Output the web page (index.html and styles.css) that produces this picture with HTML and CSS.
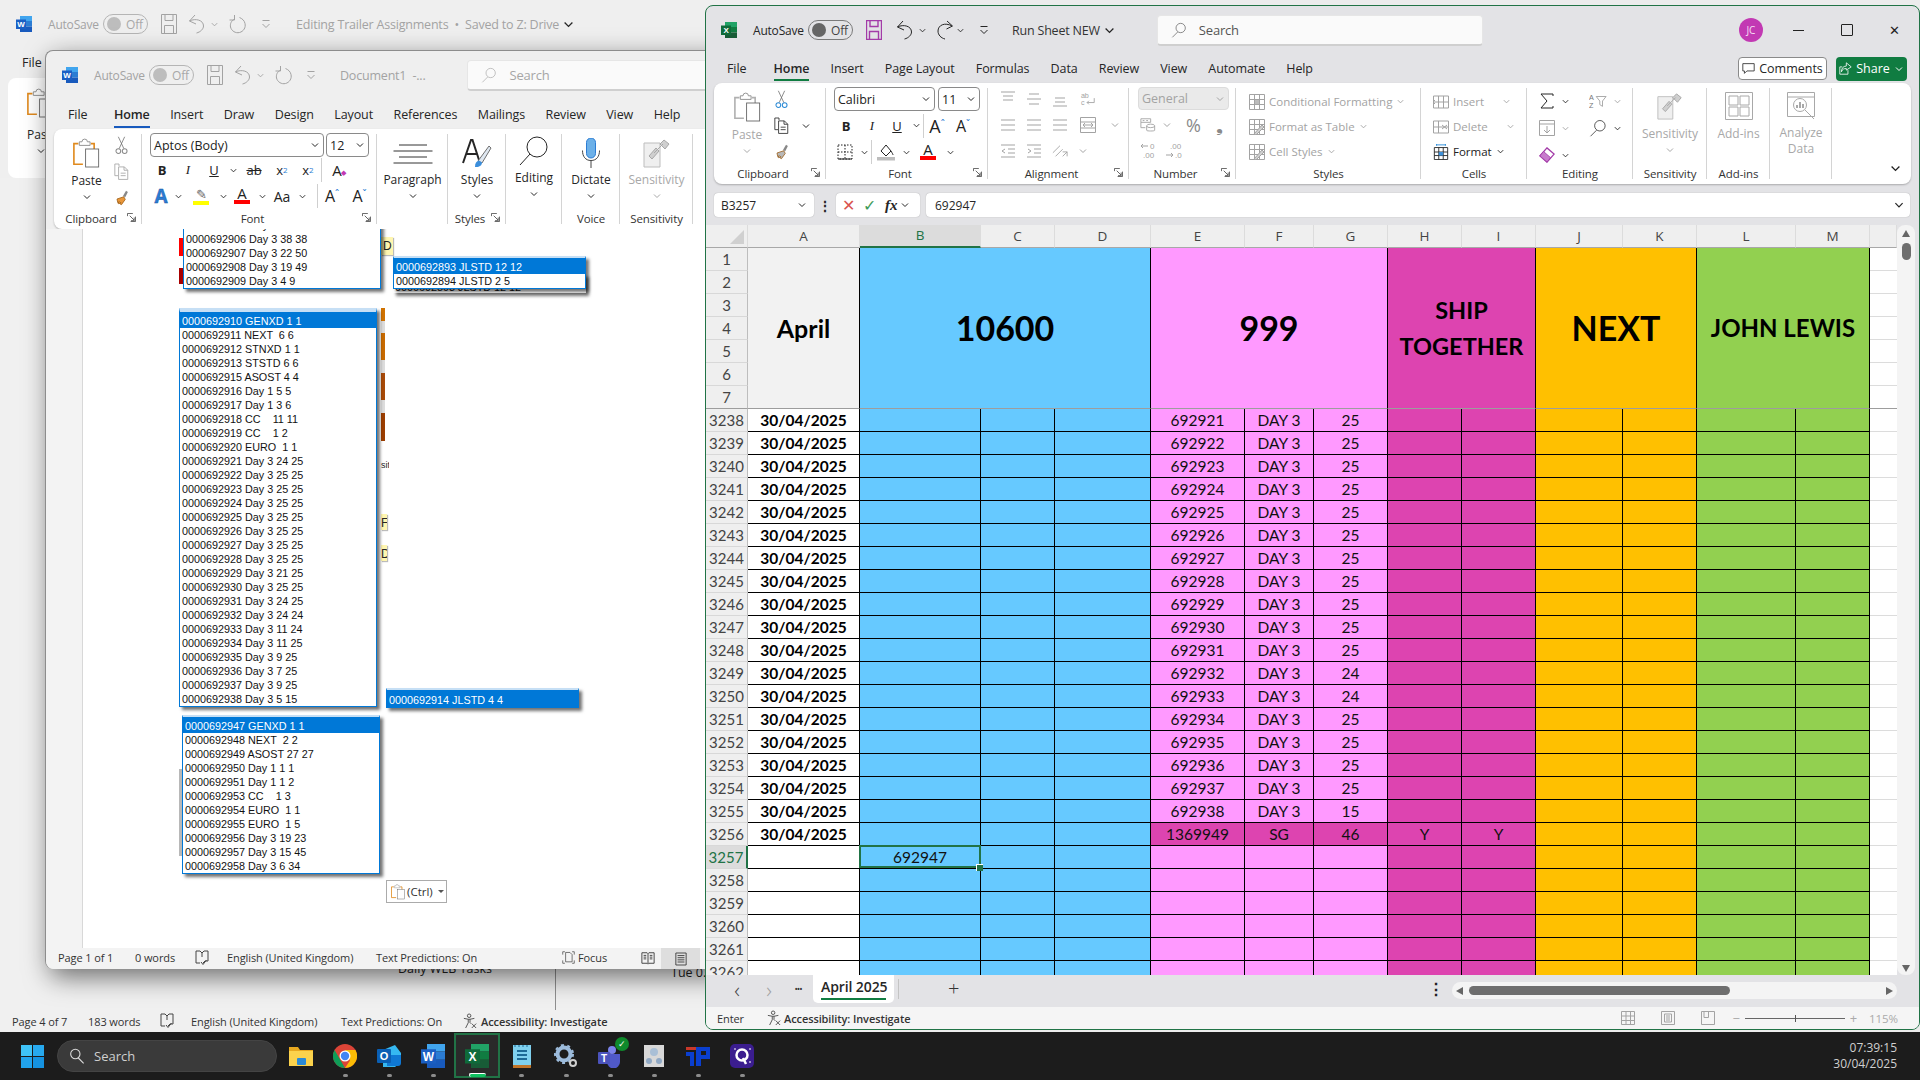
FILE: index.html
```html
<!DOCTYPE html>
<html lang="en">
<head>
<meta charset="utf-8">
<title>Word and Excel</title>
<link rel="stylesheet" href="styles.css">
</head>
<body>
<svg class="defs" aria-hidden="true">
  <symbol id="chev" viewBox="0 0 10 10"><path d="M2 3.5l3 3 3-3"/></symbol>
  <symbol id="word" viewBox="0 0 16 16"><path fill="#41a5ee" stroke="none" d="M4 0h12v5H4z"/><path fill="#2b7cd3" stroke="none" d="M4 5h12v5.500H4z"/><path fill="#185abd" stroke="none" d="M4 10.500h12V16H4z"/><rect x="0" y="3.500" width="10" height="9.500" fill="#1a5fc4" stroke="none"/><text x="5" y="11" font-size="8" font-weight="700" font-family="Liberation Sans" fill="#fff" stroke="none" text-anchor="middle">W</text></symbol>
  <symbol id="excel" viewBox="0 0 16 16"><path fill="#21a366" stroke="none" d="M4 0h12v5H4z"/><path fill="#107c41" stroke="none" d="M4 5h12v5.500H4z"/><path fill="#185c37" stroke="none" d="M4 10.500h12V16H4z"/><rect x="0" y="3.500" width="10" height="9.500" fill="#0f6b3a" stroke="none"/><text x="5" y="11" font-size="8" font-weight="700" font-family="Liberation Sans" fill="#fff" stroke="none" text-anchor="middle">X</text></symbol>
  <symbol id="save" viewBox="0 0 16 20"><path d="M.5.500h15v19H.5z M4 .5v6h8v-6 M3.500 19.500v-8h9v8"/></symbol>
  <symbol id="undo" viewBox="0 0 18 20"><path d="M7 1L1.500 7 8 10 M1.500 7c6-3 14-1 14 5 0 3-3 6-7 7"/></symbol>
  <symbol id="redo" viewBox="0 0 18 20"><path d="M11 1l5.500 5-6 3 M16 6C9 2 2 5 2 11c0 4 3 7 7 8"/></symbol>
  <symbol id="repeat" viewBox="0 0 18 20"><path d="M5.500 1v5h-5 M5.500 5C2 7 1 10 1.500 13c1 4 5 6.500 9 5.500 4-1 6.500-5 5.500-9-.5-3-3-5-5.500-6"/></symbol>
  <symbol id="qat" viewBox="0 0 10 10"><path d="M1.500 1.500h7 M1.500 5l3.500 3.500L8.500 5"/></symbol>
  <symbol id="find" viewBox="0 0 24 24"><circle cx="14.500" cy="9" r="7"/><path d="M10 15l-8 8"/></symbol>
  <symbol id="paste" viewBox="0 0 30 34"><path d="M20 6h3.500v6 M11 29H1V6h5" stroke="var(--clip,#e08a1e)" stroke-width="1.800"/><path d="M7 8V4h3a3 3 0 0 1 6 0h3v4z" fill="#fff" stroke="#8a8a8a"/><rect x="14" y="12" width="14.500" height="20" fill="#fff" stroke="#666"/></symbol>
  <symbol id="cut" viewBox="0 0 16 24"><path d="M4 1l7 15 M12 1L5 16" stroke="#6e6e6e"/><circle cx="4" cy="19" r="3" stroke="var(--sc,#8a8a8a)" stroke-width="1.300"/><circle cx="12" cy="19" r="3" stroke="var(--sc,#8a8a8a)" stroke-width="1.300"/></symbol>
  <symbol id="copy" viewBox="0 0 18 20"><path d="M6 3.500V1h-5v14h4 M5.500 4.500h7l4 4v11h-11z M12 4.500v4h4.500 M8 12h6M8 15h6"/></symbol>
  <symbol id="brush" viewBox="0 0 20 22"><path d="M12 9l4-7 2.500 1.500-3.500 7z" fill="#888" stroke="none"/><path d="M4 13l9-3 2 3.500-5 7-2-1 1-2-2.500 2-1-1 1.500-2-2 1.500z" fill="var(--br,#e9973a)" stroke="#9a5a10"/></symbol>
  <symbol id="launch" viewBox="0 0 10 10"><path d="M.5 3.500v-3h6 M3 3l5 5 M8 5v3.500H4.500 M9.500 4v5.500H4"/></symbol>
  <symbol id="book" viewBox="0 0 14 16"><path d="M1 1h4l2 2 2-2h4v10h-3l-2 2M7 3v4 M1 1v12h4"/><path d="M6 12l2 2.500 3.500-4.500"/></symbol>
  <symbol id="access" viewBox="0 0 16 18"><circle cx="7" cy="3" r="2"/><path d="M1 6l5 1h2l5-1 M6 7v4l-3 6 M8 7v4l1 1"/><path d="M10 12l5 5M15 12l-5 5"/></symbol>
  <symbol id="lines" viewBox="0 0 40 20"><path d="M6 1h28M.5 7h39M6 13h28M.5 19h39"/></symbol>
  <symbol id="styl" viewBox="0 0 30 30"><path d="M1 25L9 2h1.500L18 25 M4.500 16h11" stroke="#262626" stroke-width="2"/><path d="M16 23l11-15 2 2-9 15z" fill="#dfe7f0" stroke="#707070"/><path d="M13 29c0-4 1.500-6 4-6.500l3 2c0 3-3 5-7 4.500z" fill="#3b8edb" stroke="none"/></symbol>
  <symbol id="mag" viewBox="0 0 30 30"><circle cx="18" cy="11" r="10"/><path d="M11 18L1 29"/></symbol>
  <symbol id="mic" viewBox="0 0 20 30"><rect x="5.500" y="0" width="9" height="20" rx="4.500" fill="#6cb0e8" stroke="#2b7cd3"/><path d="M1.500 12.500c0 6 3 10 8.500 10s8.500-4 8.500-10 M10 22.500V30" stroke="#444"/></symbol>
  <symbol id="sens" viewBox="0 0 28 30"><path d="M1 5h16v24H1z" fill="#efefef" stroke="#bdbdbd"/><path d="M6 18l7-8 3 3-7 8z M17 6l4-4 5 4-4 5z" fill="#cfcfcf" stroke="#a8a8a8"/><path d="M11 15l9-9" stroke="#a8a8a8"/></symbol>
  <symbol id="al-l" viewBox="0 0 16 12"><path d="M1 1h14M1 6h14M1 11h14" /></symbol>
  <symbol id="al-t" viewBox="0 0 16 16"><path d="M1 1h14M3 5h10M3 9h10"/></symbol>
  <symbol id="al-m" viewBox="0 0 16 16"><path d="M3 3h10M1 8h14M3 13h10"/></symbol>
  <symbol id="al-b" viewBox="0 0 16 16"><path d="M3 7h10M3 11h10M1 15h14"/></symbol>
  <symbol id="wrap" viewBox="0 0 16 18"><text x="0" y="8" font-size="8" font-family="Liberation Sans" fill="currentColor" stroke="none">ab</text><text x="0" y="16" font-size="8" font-family="Liberation Sans" fill="currentColor" stroke="none">c</text><path d="M15 8v5H7m2-2l-2 2 2 2"/></symbol>
  <symbol id="merge" viewBox="0 0 16 16"><path d="M.5.500h15v15H.5z M.5 5h15M.5 11h15 M3 8h10 M5 6l-2 2 2 2 M11 6l2 2-2 2"/></symbol>
  <symbol id="indl" viewBox="0 0 16 14"><path d="M1 1h14M8 5h7M8 9h7M1 13h14 M5 5L2 7l3 2"/></symbol>
  <symbol id="indr" viewBox="0 0 16 14"><path d="M1 1h14M8 5h7M8 9h7M1 13h14 M2 5l3 2-3 2"/></symbol>
  <symbol id="orient" viewBox="0 0 18 16"><path d="M1 10L9 2M4 14l8-8 M12 14l5-5 M17 14V9h-5"/></symbol>
  <symbol id="border" viewBox="0 0 16 16"><path d="M1 1h14v14H1z M8 1v14M1 8h14" stroke-dasharray="1.500 1.500"/><path d="M1 15h14"/></symbol>
  <symbol id="fill" viewBox="0 0 18 18"><path d="M4 8l5-6 5 6-5 5z"/><path d="M14 8c1 2 2 3 2 4" /><rect x="0" y="14" width="18" height="3.500" fill="#bdbdbd" stroke="none"/></symbol>
  <symbol id="acc" viewBox="0 0 18 16"><path d="M1 1h11v4H1z M3 3h2M7 3h2 M1 5v6h5"/><ellipse cx="12" cy="9" rx="4.500" ry="2"/><path d="M7.500 9v5c0 1 9 1 9 0V9"/></symbol>
  <symbol id="dec-l" viewBox="0 0 18 18"><path d="M1 5h7M3 3L1 5l2 2"/><text x="10" y="8" font-size="8" font-family="Liberation Sans" fill="currentColor" stroke="none">0</text><text x="3" y="17" font-size="8" font-family="Liberation Sans" fill="currentColor" stroke="none">.00</text></symbol>
  <symbol id="dec-r" viewBox="0 0 18 18"><text x="5" y="8" font-size="8" font-family="Liberation Sans" fill="currentColor" stroke="none">.00</text><path d="M1 14h7M6 12l2 2-2 2"/><text x="10" y="17" font-size="8" font-family="Liberation Sans" fill="currentColor" stroke="none">.0</text></symbol>
  <symbol id="cf" viewBox="0 0 16 16"><path d="M.5.500h15v15H.5z M.5 5.500h15M.5 10.500h15M5.500.5v15M10.500.5v15"/><rect x="6" y="6" width="4" height="4" fill="#bbb" stroke="none"/></symbol>
  <symbol id="tbl" viewBox="0 0 16 16"><path d="M.5.500h15v15H.5z M.5 5.500h15M.5 10.500h15M5.500.5v15M10.500.5v15"/><path d="M5 15l8-9 2 2-8 8z" fill="#d0d0d0"/></symbol>
  <symbol id="c-ins" viewBox="0 0 16 14"><path d="M.5 1h15v12H.5z M5.500 1v12M10.500 1v12M5.500 7h10"/><path d="M5 7H0m2-2L0 7l2 2"/></symbol>
  <symbol id="c-del" viewBox="0 0 16 14"><path d="M.5 1h15v12H.5z M5.500 1v12M.5 7h15"/><path d="M9 5l5 4M14 5l-5 4"/></symbol>
  <symbol id="c-fmt" viewBox="0 0 16 18"><path d="M.5 4h15v13.500H.5z M.5 9h15M.5 13h15M5.500 4v13.500M10.500 4v13.500"/><rect x="5.500" y="9" width="5" height="4" fill="#3d8fd8" stroke="none"/><path d="M3 1h10M3 0v2M13 0v2" stroke="#1f86d8"/></symbol>
  <symbol id="sum" viewBox="0 0 16 16"><path d="M14 3V1H2l6 7-6 7h12v-2"/></symbol>
  <symbol id="sort" viewBox="0 0 20 18"><text x="0" y="8" font-size="8" font-family="Liberation Sans" fill="#777" stroke="none">A</text><text x="0" y="17" font-size="8" font-family="Liberation Sans" fill="#777" stroke="none">Z</text><path d="M8 4h11l-4 5v6l-3-2V9z"/></symbol>
  <symbol id="fdown" viewBox="0 0 16 16"><path d="M.5.500h15v15H.5z M.5 4h15 M8 6v7M5 10l3 3 3-3"/></symbol>
  <symbol id="erase" viewBox="0 0 18 18"><path d="M1 10l8-9 8 7-8 9z" fill="#fff" stroke="#a33ba8" stroke-width="1.500"/><path d="M1 10l4-5 8 7-4 5z" fill="#c77bcc" stroke="#a33ba8"/></symbol>
  <symbol id="addin" viewBox="0 0 28 28"><path d="M.5.500h27v27H.5z M4 4h9v9H4z M15 4h9v9h-9z M4 15h9v9H4z M15 15h9v9h-9z"/></symbol>
  <symbol id="analyze" viewBox="0 0 28 28"><path d="M.5.500h27v24H.5z M.5 5h27"/><circle cx="13" cy="13" r="6.500" fill="#fff"/><path d="M10 16v-3M13 16v-6M16 16v-4" stroke-width="2"/><path d="M18 18l9 9"/></symbol>
  <symbol id="comment" viewBox="0 0 16 16"><path d="M1 2h14v9H6l-3 3v-3H1z"/></symbol>
  <symbol id="share" viewBox="0 0 16 16"><path d="M9 1l6 5-6 4V8C6 8 4 9 3 12c0-4 2-7 6-7z M11 10v5H1V6h3"/></symbol>
  <symbol id="focus" viewBox="0 0 18 18"><path d="M1 5V1h3 M14 1h3v4 M1 13v4h3 M14 17h3v-4 M5 2h6l3 3v10H5z"/></symbol>
  <symbol id="read" viewBox="0 0 16 16"><path d="M1 2h6l1 1 1-1h6v12H9l-1 1-1-1H1z M8 3v11 M3 5h3M3 7h3M3 9h3M10 5h3M10 7h3M10 9h3"/></symbol>
  <symbol id="print" viewBox="0 0 14 16"><path d="M1 1h12v14H1z M3 4h8M3 6.500h8M3 9h8M3 11.500h8"/></symbol>
  <symbol id="grid" viewBox="0 0 14 14"><path d="M.5.500h13v13H.5z M.5 5h13M.5 9.500h13M5 .5v13M9.500.5v13"/></symbol>
  <symbol id="pagel" viewBox="0 0 14 14"><path d="M.5.500h13v13H.5z M3.500 3h7v8h-7z M5 5h4M5 7h4M5 9h4"/></symbol>
  <symbol id="pageb" viewBox="0 0 14 14"><path d="M.5.500h13v13H.5z M7.500.5v6H3V.5"/></symbol>
  <symbol id="win" viewBox="0 0 24 24"><path fill="#3fc3f7" d="M0 0h11.500v11.500H0z"/><path fill="#27a9ee" d="M12.500 0H24v11.500H12.500z"/><path fill="#21a3ec" d="M0 12.500h11.500V24H0z"/><path fill="#1592e0" d="M12.500 12.500H24V24H12.500z"/></symbol>
  <symbol id="folder" viewBox="0 0 24 24"><path fill="#e8a920" d="M0 3h9l2 3h13v16H0z"/><path fill="#fbd24c" d="M0 7h24v15H0z"/><rect x="8" y="14" width="9" height="7" rx="1" fill="#2a8ad6"/></symbol>
  <symbol id="chrome" viewBox="0 0 24 24"><circle cx="12" cy="12" r="12" fill="#db4437"/><path fill="#0f9d58" d="M12 24A12 12 0 0 1 1.600 6l6 10.500z"/><path fill="#fbbc05" d="M12 24A12 12 0 0 0 22.400 6H12l5 10.500z"/><circle cx="12" cy="12" r="5.500" fill="#fff"/><circle cx="12" cy="12" r="4.200" fill="#4285f4"/></symbol>
  <symbol id="outlook" viewBox="0 0 24 24"><path fill="#35b8f1" d="M6 6l12-5 6 8v9l-6 5H6z"/><path fill="#0f78d4" d="M10 11h14v8a3 3 0 0 1-3 3H10z"/><rect x="0" y="5" width="14" height="14" rx="1" fill="#0a5fb4"/><text x="7" y="16" font-size="11" font-weight="700" font-family="Liberation Sans" fill="#fff" text-anchor="middle">O</text></symbol>
  <symbol id="notes" viewBox="0 0 24 24"><rect x="3" y="1" width="18" height="22" fill="#7fd0ee"/><rect x="3" y="21" width="18" height="3" fill="#c0752a"/><path d="M7 7h10M7 11h10M7 15h10" stroke="#1d6a96" stroke-width="2"/><path d="M5 1v2M9 1v2M13 1v2M17 1v2" stroke="#1d6a96"/></symbol>
  <symbol id="gear" viewBox="0 0 24 24"><circle cx="10" cy="10" r="6.500" fill="none" stroke="#9dbcdc" stroke-width="4"/><circle cx="10" cy="10" r="9" fill="none" stroke="#9dbcdc" stroke-width="2" stroke-dasharray="3 3.500"/><circle cx="19" cy="19" r="3" fill="none" stroke="#d0d0d0" stroke-width="2"/></symbol>
  <symbol id="teams" viewBox="0 0 24 24"><circle cx="14" cy="6" r="4" fill="#7b83eb"/><path fill="#5059c9" d="M9 10h13v8a6 6 0 0 1-13 0z"/><rect x="0" y="8" width="12" height="12" rx="1" fill="#4b53bc"/><text x="6" y="18" font-size="10" font-weight="700" font-family="Liberation Sans" fill="#fff" text-anchor="middle">T</text></symbol>
  <symbol id="disk" viewBox="0 0 24 24"><rect x="2" y="1" width="20" height="22" fill="#d8d8d8"/><circle cx="12" cy="8" r="4" fill="#a9bfd6"/><circle cx="7" cy="17" r="3" fill="#8fa8c4"/><circle cx="17" cy="17" r="3" fill="#8fa8c4"/></symbol>
  <symbol id="pp" viewBox="0 0 24 24"><path fill="#c8382a" d="M0 3h10v3H0z"/><path fill="#0a3fd0" d="M0 8h8v14H4V12H0z M10 3h14v12H15v7h-5zM15 7v4h5V7z"/></symbol>
  <symbol id="qq" viewBox="0 0 24 24"><rect width="24" height="24" rx="5" fill="#3b1d8f"/><circle cx="12" cy="11" r="5.500" fill="none" stroke="#fff" stroke-width="2.500"/><path d="M13 14l3 6" stroke="#fff" stroke-width="2.500"/><path d="M4 5h2M20 4v2M19 18h2" stroke="#fff"/></symbol>
</svg>

<main class="desktop">
  <!-- window behind -->
  <section class="win-back">
    <header class="title">
      <svg class="q-app"><use href="#word"/></svg>
      <span class="q-auto dim">AutoSave</span>
      <span class="toggle dim"><i></i>Off</span>
      <svg class="q-save dim ic"><use href="#save"/></svg>
      <svg class="q-undo dim ic"><use href="#undo"/></svg>
      <svg class="q-chev dim ic"><use href="#chev"/></svg>
      <svg class="q-redo dim ic"><use href="#repeat"/></svg>
      <svg class="q-qat dim ic"><use href="#qat"/></svg>
      <span class="q-name dim">Editing Trailer Assignments&nbsp; •&nbsp; Saved to Z: Drive</span>
      <svg class="chev dim ic"><use href="#chev"/></svg>
    </header>
    <div class="back-tab">File</div>
    <div class="back-rib">
      <svg class="back-paste ic"><use href="#paste"/></svg>
      <span>Pas</span>
      <svg class="chev ic"><use href="#chev"/></svg>
    </div>
    <div class="back-doc">
      <span class="back-line"></span>
      <span class="back-txt a">Daily WEB Tasks</span>
      <span class="back-txt b">Tue 0...</span>
    </div>
    <footer class="status back-status">
      <span class="st-a">Page 4 of 7</span>
      <span class="st-b">183 words</span>
      <svg class="st-i ic"><use href="#book"/></svg>
      <span class="st-c">English (United Kingdom)</span>
      <span class="st-d">Text Predictions: On</span>
      <svg class="st-i st-acc ic"><use href="#access"/></svg>
      <b class="st-e">Accessibility: Investigate</b>
    </footer>
  </section>

  <!-- front word window -->
  <section class="win-word">
    <header class="title">
      <svg class="q-app"><use href="#word"/></svg>
      <span class="q-auto dim">AutoSave</span>
      <span class="toggle dim"><i></i>Off</span>
      <svg class="q-save dim ic"><use href="#save"/></svg>
      <svg class="q-undo dim ic"><use href="#undo"/></svg>
      <svg class="q-chev dim ic"><use href="#chev"/></svg>
      <svg class="q-redo dim ic"><use href="#repeat"/></svg>
      <svg class="q-qat dim ic"><use href="#qat"/></svg>
      <span class="q-name dim">Document1 &nbsp;-...</span>
      <span class="search word-search dim"><svg class="ic"><use href="#find"/></svg>Search</span>
    </header>
    <nav class="tabs word-tabs">
      <span>File</span><span class="on">Home</span><span>Insert</span><span>Draw</span><span>Design</span><span>Layout</span><span>References</span><span>Mailings</span><span>Review</span><span>View</span><span>Help</span>
    </nav>
    <div class="ribbon word-ribbon">
      <div class="grp wc-clip">
        <div class="grp-body cols">
          <div class="big paste-big">
            <svg class="ic i-paste"><use href="#paste"/></svg>
            <span>Paste</span>
            <svg class="chev ic"><use href="#chev"/></svg>
          </div>
          <div class="stack">
            <svg class="ic s-tool dim"><use href="#cut"/></svg>
            <svg class="ic s-tool dim"><use href="#copy"/></svg>
            <svg class="ic s-tool dim"><use href="#brush"/></svg>
          </div>
        </div>
        <div class="lab lau">Clipboard<svg class="ic launch"><use href="#launch"/></svg></div>
      </div>
      <div class="grp wc-font">
        <div class="grp-body">
          <div class="combo-row">
            <span class="combo w174">Aptos (Body)<svg class="chev ic"><use href="#chev"/></svg></span>
            <span class="combo w43">12<svg class="chev ic"><use href="#chev"/></svg></span>
          </div>
          <div class="btn-row r1">
            <b class="b w26">B</b><i class="b w26 serifi">I</i><u class="b w26">U</u><span class="b w12"><svg class="chev ic"><use href="#chev"/></svg></span>
            <s class="b w30 dim2">ab</s><span class="b w26">x<sub>2</sub></span><span class="b w26">x<sup>2</sup></span><span class="sep"></span><span class="b w30 ap">A<em>◆</em></span>
          </div>
          <div class="btn-row r2">
            <span class="b w24 txt-eff">A</span><span class="b w10"><svg class="chev ic"><use href="#chev"/></svg></span>
            <span class="b w36 col-a"><span class="pen">✎</span><em class="bar yellow"></em></span><span class="b w8"><svg class="chev ic"><use href="#chev"/></svg></span>
            <span class="b w30 col-a fa">A<em class="bar red"></em></span><span class="b w10"><svg class="chev ic"><use href="#chev"/></svg></span>
            <span class="b w30 aa">Aa</span><span class="b w10"><svg class="chev ic"><use href="#chev"/></svg></span><span class="sep r2sep"></span>
            <span class="b w28 grow">A<em>ˆ</em></span><span class="b w27 grow">A<em>ˇ</em></span>
          </div>
        </div>
        <div class="lab lau">Font<svg class="ic launch"><use href="#launch"/></svg></div>
      </div>
      <div class="grp wc-para">
        <div class="grp-body big top6">
          <svg class="ic i-lines"><use href="#lines"/></svg>
          <span>Paragraph</span>
          <svg class="chev ic"><use href="#chev"/></svg>
        </div>
      </div>
      <div class="grp wc-styl">
        <div class="grp-body big top6">
          <svg class="ic i-30"><use href="#styl"/></svg>
          <span>Styles</span>
          <svg class="chev ic"><use href="#chev"/></svg>
        </div>
        <div class="lab lau">Styles<svg class="ic launch"><use href="#launch"/></svg></div>
      </div>
      <div class="grp wc-edit">
        <div class="grp-body big top4">
          <svg class="ic i-30"><use href="#mag"/></svg>
          <span>Editing</span>
          <svg class="chev ic"><use href="#chev"/></svg>
        </div>
      </div>
      <div class="grp wc-voice">
        <div class="grp-body big top6">
          <svg class="ic i-30"><use href="#mic"/></svg>
          <span>Dictate</span>
          <svg class="chev ic"><use href="#chev"/></svg>
        </div>
        <div class="lab">Voice</div>
      </div>
      <div class="grp wc-sens last">
        <div class="grp-body big top6 off">
          <svg class="ic i-30"><use href="#sens"/></svg>
          <span>Sensitivity</span>
          <svg class="chev ic"><use href="#chev"/></svg>
        </div>
        <div class="lab">Sensitivity</div>
      </div>
    </div>
    <div class="word-doc">
      <span class="page-edge"></span>
      <span class="sl red1"></span><span class="sl red2"></span>
      <span class="sl tag d1">D</span><span class="sl tag f2">F</span><span class="sl tag d3">D</span>
      <span class="sl or1"></span><span class="sl gr1"></span><span class="sl or2"></span><span class="sl gr2"></span><span class="sl br1"></span><span class="sl gr3"></span><span class="sl br2"></span><span class="sl sit">sit</span><span class="sl pg"></span>

      <div class="lb under">0000692893 JLSTD 12 12</div>
      <div class="lb lb1">
        <div>0000692905 Day 3 25 25</div>
        <div>0000692906 Day 3 38 38</div>
        <div>0000692907 Day 3 22 50</div>
        <div>0000692908 Day 3 19 49</div>
        <div>0000692909 Day 3 4 9</div>
      </div>
      <div class="lb lb2 topped">
        <div class="sel">0000692893 JLSTD 12 12</div>
        <div>0000692894 JLSTD 2 5</div>
      </div>
      <div class="lb lb3 topped">
        <div class="sel">0000692910 GENXD 1 1</div>
        <div>0000692911 NEXT  6 6</div>
        <div>0000692912 STNXD 1 1</div>
        <div>0000692913 STSTD 6 6</div>
        <div>0000692915 ASOST 4 4</div>
        <div>0000692916 Day 1 5 5</div>
        <div>0000692917 Day 1 3 6</div>
        <div>0000692918 CC    11 11</div>
        <div>0000692919 CC    1 2</div>
        <div>0000692920 EURO  1 1</div>
        <div>0000692921 Day 3 24 25</div>
        <div>0000692922 Day 3 25 25</div>
        <div>0000692923 Day 3 25 25</div>
        <div>0000692924 Day 3 25 25</div>
        <div>0000692925 Day 3 25 25</div>
        <div>0000692926 Day 3 25 25</div>
        <div>0000692927 Day 3 25 25</div>
        <div>0000692928 Day 3 25 25</div>
        <div>0000692929 Day 3 21 25</div>
        <div>0000692930 Day 3 25 25</div>
        <div>0000692931 Day 3 24 25</div>
        <div>0000692932 Day 3 24 24</div>
        <div>0000692933 Day 3 11 24</div>
        <div>0000692934 Day 3 11 25</div>
        <div>0000692935 Day 3 9 25</div>
        <div>0000692936 Day 3 7 25</div>
        <div>0000692937 Day 3 9 25</div>
        <div>0000692938 Day 3 5 15</div>
      </div>
      <div class="lb lb4 topped">
        <div class="sel">0000692914 JLSTD 4 4</div>
      </div>
      <div class="lb lb5 topped">
        <div class="sel">0000692947 GENXD 1 1</div>
        <div>0000692948 NEXT  2 2</div>
        <div>0000692949 ASOST 27 27</div>
        <div>0000692950 Day 1 1 1</div>
        <div>0000692951 Day 1 1 2</div>
        <div>0000692953 CC    1 3</div>
        <div>0000692954 EURO  1 1</div>
        <div>0000692955 EURO  1 5</div>
        <div>0000692956 Day 3 19 23</div>
        <div>0000692957 Day 3 15 45</div>
        <div>0000692958 Day 3 6 34</div>
      </div>
      <div class="ctrl"><svg class="ic"><use href="#paste"/></svg>(Ctrl)<span class="caret"></span></div>
    </div>
    <footer class="status word-status">
      <span class="st-a">Page 1 of 1</span>
      <span class="st-b">0 words</span>
      <svg class="st-i ic"><use href="#book"/></svg>
      <span class="st-c">English (United Kingdom)</span>
      <span class="st-d">Text Predictions: On</span>
      <span class="st-focus"><svg class="ic"><use href="#focus"/></svg>Focus</span>
      <svg class="st-read ic"><use href="#read"/></svg>
      <span class="st-print"><svg class="ic"><use href="#print"/></svg></span>
    </footer>
  </section>

  <!-- excel window -->
  <section class="win-excel">
    <header class="title">
      <svg class="q-app"><use href="#excel"/></svg>
      <span class="q-auto">AutoSave</span>
      <span class="toggle"><i></i>Off</span>
      <svg class="q-save ic purple"><use href="#save"/></svg>
      <svg class="q-undo ic"><use href="#undo"/></svg>
      <svg class="q-chev ic"><use href="#chev"/></svg>
      <svg class="q-redo ic"><use href="#redo"/></svg>
      <svg class="q-chev2 ic"><use href="#chev"/></svg>
      <svg class="q-qat ic"><use href="#qat"/></svg>
      <span class="q-name">Run Sheet NEW</span>
      <svg class="chev ic"><use href="#chev"/></svg>
      <span class="search xl-search"><svg class="ic"><use href="#find"/></svg>Search</span>
      <span class="avatar">JC</span>
      <span class="wbtn min"></span>
      <span class="wbtn max"></span>
      <span class="wbtn close">✕</span>
    </header>
    <div class="tabbar">
      <nav class="tabs xl-tabs">
        <span>File</span><span class="on">Home</span><span>Insert</span><span>Page Layout</span><span>Formulas</span><span>Data</span><span>Review</span><span>View</span><span>Automate</span><span>Help</span>
      </nav>
      <span class="comments"><svg class="ic"><use href="#comment"/></svg>Comments</span>
      <span class="share"><svg class="ic"><use href="#share"/></svg>Share<svg class="chev ic"><use href="#chev"/></svg></span>
    </div>
    <div class="ribbon xl-ribbon">
      <div class="grp xc-clip">
        <div class="grp-body cols">
          <div class="big xl-paste off">
            <svg class="ic i-paste grey-clip"><use href="#paste"/></svg>
            <span>Paste</span>
            <svg class="chev ic"><use href="#chev"/></svg>
          </div>
          <div class="stack xl-stack">
            <svg class="ic s-tool blue-sc"><use href="#cut"/></svg>
            <span class="s-line"><svg class="ic s-tool"><use href="#copy"/></svg><svg class="chev ic"><use href="#chev"/></svg></span>
            <svg class="ic s-tool grey-br"><use href="#brush"/></svg>
          </div>
        </div>
        <div class="lab lau">Clipboard<svg class="ic launch"><use href="#launch"/></svg></div>
      </div>
      <div class="grp xc-font">
        <div class="grp-body">
          <div class="combo-row">
            <span class="combo w101">Calibri<svg class="chev ic"><use href="#chev"/></svg></span>
            <span class="combo w42">11<svg class="chev ic"><use href="#chev"/></svg></span>
          </div>
          <div class="btn-row xr1">
            <b class="b w26">B</b><i class="b w26 serifi">I</i><u class="b w24">U</u><span class="b w14"><svg class="chev ic"><use href="#chev"/></svg></span><span class="sep"></span>
            <span class="b w26 grow big-a">A<em>ˆ</em></span><span class="b w26 grow">A<em>ˇ</em></span>
          </div>
          <div class="btn-row xr2">
            <span class="b w24 dim"><svg class="ic s16"><use href="#border"/></svg></span><span class="b w14 dim"><svg class="chev ic"><use href="#chev"/></svg></span><span class="sep"></span>
            <span class="b w28 dim"><svg class="ic s18"><use href="#fill"/></svg></span><span class="b w12 dim"><svg class="chev ic"><use href="#chev"/></svg></span>
            <span class="b w32 col-a fa">A<em class="bar red"></em></span><span class="b w12"><svg class="chev ic"><use href="#chev"/></svg></span>
          </div>
        </div>
        <div class="lab lau">Font<svg class="ic launch"><use href="#launch"/></svg></div>
      </div>
      <div class="grp xc-align">
        <div class="grp-body al-body dim">
          <div class="al-row"><svg class="ic s16"><use href="#al-t"/></svg><svg class="ic s16"><use href="#al-m"/></svg><svg class="ic s16"><use href="#al-b"/></svg><svg class="ic s16 ml2"><use href="#wrap"/></svg></div>
          <div class="al-row"><svg class="ic s16"><use href="#al-l"/></svg><svg class="ic s16"><use href="#al-l"/></svg><svg class="ic s16"><use href="#al-l"/></svg><svg class="ic s16 ml2"><use href="#merge"/></svg><svg class="chev ic ml8"><use href="#chev"/></svg></div>
          <div class="al-row"><svg class="ic s16"><use href="#indl"/></svg><svg class="ic s16"><use href="#indr"/></svg><svg class="ic s16"><use href="#orient"/></svg><svg class="chev ic"><use href="#chev"/></svg></div>
        </div>
        <div class="lab lau">Alignment<svg class="ic launch"><use href="#launch"/></svg></div>
      </div>
      <div class="grp xc-num">
        <div class="grp-body num-body dim">
          <span class="combo general">General<svg class="chev ic"><use href="#chev"/></svg></span>
          <div class="num-row"><svg class="ic s16"><use href="#acc"/></svg><svg class="chev ic"><use href="#chev"/></svg><span class="pct">%</span><span class="cma">❟</span></div>
          <div class="num-row dec"><svg class="ic s18"><use href="#dec-l"/></svg><svg class="ic s18"><use href="#dec-r"/></svg></div>
        </div>
        <div class="lab lau">Number<svg class="ic launch"><use href="#launch"/></svg></div>
      </div>
      <div class="grp xc-sty">
        <div class="grp-body list dim">
          <span><svg class="ic s16"><use href="#cf"/></svg>Conditional Formatting<svg class="chev ic"><use href="#chev"/></svg></span>
          <span><svg class="ic s16"><use href="#tbl"/></svg>Format as Table<svg class="chev ic"><use href="#chev"/></svg></span>
          <span><svg class="ic s16"><use href="#tbl"/></svg>Cell Styles<svg class="chev ic"><use href="#chev"/></svg></span>
        </div>
        <div class="lab">Styles</div>
      </div>
      <div class="grp xc-cells">
        <div class="grp-body list">
          <span class="dim"><svg class="ic s16"><use href="#c-ins"/></svg>Insert<svg class="chev ic far"><use href="#chev"/></svg></span>
          <span class="dim"><svg class="ic s16"><use href="#c-del"/></svg>Delete<svg class="chev ic far"><use href="#chev"/></svg></span>
          <span><svg class="ic s16"><use href="#c-fmt"/></svg>Format<svg class="chev ic"><use href="#chev"/></svg></span>
        </div>
        <div class="lab">Cells</div>
      </div>
      <div class="grp xc-edit">
        <div class="grp-body ed-body">
          <span class="ed-a"><svg class="ic s16"><use href="#sum"/></svg><svg class="chev ic"><use href="#chev"/></svg></span>
          <span class="ed-b dim"><svg class="ic s18"><use href="#sort"/></svg><svg class="chev ic"><use href="#chev"/></svg></span>
          <span class="ed-a dim"><svg class="ic s16"><use href="#fdown"/></svg><svg class="chev ic"><use href="#chev"/></svg></span>
          <span class="ed-b"><svg class="ic s18"><use href="#find"/></svg><svg class="chev ic"><use href="#chev"/></svg></span>
          <span class="ed-a"><svg class="ic s16"><use href="#erase"/></svg><svg class="chev ic"><use href="#chev"/></svg></span>
        </div>
        <div class="lab">Editing</div>
      </div>
      <div class="grp xc-sens">
        <div class="grp-body big top6 off">
          <svg class="ic i-28"><use href="#sens"/></svg>
          <span>Sensitivity</span>
          <svg class="chev ic"><use href="#chev"/></svg>
        </div>
        <div class="lab">Sensitivity</div>
      </div>
      <div class="grp xc-add">
        <div class="grp-body big top6 off">
          <svg class="ic i-28"><use href="#addin"/></svg>
          <span>Add-ins</span>
        </div>
        <div class="lab">Add-ins</div>
      </div>
      <div class="grp xc-an">
        <div class="grp-body big top6 off">
          <svg class="ic i-28"><use href="#analyze"/></svg>
          <span class="two">Analyze<br>Data</span>
        </div>
      </div>
      <svg class="ic collapse"><use href="#chev"/></svg>
    </div>
    <div class="fbar">
      <span class="namebox">B3257<svg class="chev ic"><use href="#chev"/></svg></span>
      <span class="kebab">⋮</span>
      <span class="fbtns"><span class="fx-x">✕</span><span class="fx-ok">✓</span><span class="fx-f">fx</span><svg class="chev ic dim"><use href="#chev"/></svg></span>
      <span class="finput">692947<svg class="chev ic"><use href="#chev"/></svg></span>
    </div>
    <div class="gridwrap">
      <div class="sheetclip">
        <table class="sheet">
          <colgroup>
            <col class="c-rh"><col class="c-a"><col class="c-b"><col class="c-c"><col class="c-d"><col class="c-e"><col class="c-f"><col class="c-g"><col class="c-h"><col class="c-i"><col class="c-j"><col class="c-k"><col class="c-l"><col class="c-m"><col class="c-n">
          </colgroup>
          <thead>
            <tr><th class="corner"><span></span></th><th>A</th><th class="on">B</th><th>C</th><th>D</th><th>E</th><th>F</th><th>G</th><th>H</th><th>I</th><th>J</th><th>K</th><th>L</th><th>M</th><th></th></tr>
          </thead>
          <tbody>
            <tr><th>1</th><td rowspan="7" class="hd h-april">April</td><td rowspan="7" colspan="3" class="hd h-big">10600</td><td rowspan="7" colspan="3" class="hd h-big">999</td><td rowspan="7" colspan="2" class="hd h-ship">SHIP<br>TOGETHER</td><td rowspan="7" colspan="2" class="hd h-big">NEXT</td><td rowspan="7" colspan="2" class="hd h-john">JOHN LEWIS</td><td class="n"></td></tr>
            <tr><th>2</th><td class="n"></td></tr>
            <tr><th>3</th><td class="n"></td></tr>
            <tr><th>4</th><td class="n"></td></tr>
            <tr><th>5</th><td class="n"></td></tr>
            <tr><th>6</th><td class="n"></td></tr>
            <tr class="frozen"><th>7</th><td class="n"></td></tr>
            <tr><th>3238</th><td class="dt">30/04/2025</td><td></td><td></td><td></td><td>692921</td><td>DAY 3</td><td>25</td><td></td><td></td><td></td><td></td><td></td><td></td><td class="n"></td></tr>
            <tr><th>3239</th><td class="dt">30/04/2025</td><td></td><td></td><td></td><td>692922</td><td>DAY 3</td><td>25</td><td></td><td></td><td></td><td></td><td></td><td></td><td class="n"></td></tr>
            <tr><th>3240</th><td class="dt">30/04/2025</td><td></td><td></td><td></td><td>692923</td><td>DAY 3</td><td>25</td><td></td><td></td><td></td><td></td><td></td><td></td><td class="n"></td></tr>
            <tr><th>3241</th><td class="dt">30/04/2025</td><td></td><td></td><td></td><td>692924</td><td>DAY 3</td><td>25</td><td></td><td></td><td></td><td></td><td></td><td></td><td class="n"></td></tr>
            <tr><th>3242</th><td class="dt">30/04/2025</td><td></td><td></td><td></td><td>692925</td><td>DAY 3</td><td>25</td><td></td><td></td><td></td><td></td><td></td><td></td><td class="n"></td></tr>
            <tr><th>3243</th><td class="dt">30/04/2025</td><td></td><td></td><td></td><td>692926</td><td>DAY 3</td><td>25</td><td></td><td></td><td></td><td></td><td></td><td></td><td class="n"></td></tr>
            <tr><th>3244</th><td class="dt">30/04/2025</td><td></td><td></td><td></td><td>692927</td><td>DAY 3</td><td>25</td><td></td><td></td><td></td><td></td><td></td><td></td><td class="n"></td></tr>
            <tr><th>3245</th><td class="dt">30/04/2025</td><td></td><td></td><td></td><td>692928</td><td>DAY 3</td><td>25</td><td></td><td></td><td></td><td></td><td></td><td></td><td class="n"></td></tr>
            <tr><th>3246</th><td class="dt">30/04/2025</td><td></td><td></td><td></td><td>692929</td><td>DAY 3</td><td>25</td><td></td><td></td><td></td><td></td><td></td><td></td><td class="n"></td></tr>
            <tr><th>3247</th><td class="dt">30/04/2025</td><td></td><td></td><td></td><td>692930</td><td>DAY 3</td><td>25</td><td></td><td></td><td></td><td></td><td></td><td></td><td class="n"></td></tr>
            <tr><th>3248</th><td class="dt">30/04/2025</td><td></td><td></td><td></td><td>692931</td><td>DAY 3</td><td>25</td><td></td><td></td><td></td><td></td><td></td><td></td><td class="n"></td></tr>
            <tr><th>3249</th><td class="dt">30/04/2025</td><td></td><td></td><td></td><td>692932</td><td>DAY 3</td><td>24</td><td></td><td></td><td></td><td></td><td></td><td></td><td class="n"></td></tr>
            <tr><th>3250</th><td class="dt">30/04/2025</td><td></td><td></td><td></td><td>692933</td><td>DAY 3</td><td>24</td><td></td><td></td><td></td><td></td><td></td><td></td><td class="n"></td></tr>
            <tr><th>3251</th><td class="dt">30/04/2025</td><td></td><td></td><td></td><td>692934</td><td>DAY 3</td><td>25</td><td></td><td></td><td></td><td></td><td></td><td></td><td class="n"></td></tr>
            <tr><th>3252</th><td class="dt">30/04/2025</td><td></td><td></td><td></td><td>692935</td><td>DAY 3</td><td>25</td><td></td><td></td><td></td><td></td><td></td><td></td><td class="n"></td></tr>
            <tr><th>3253</th><td class="dt">30/04/2025</td><td></td><td></td><td></td><td>692936</td><td>DAY 3</td><td>25</td><td></td><td></td><td></td><td></td><td></td><td></td><td class="n"></td></tr>
            <tr><th>3254</th><td class="dt">30/04/2025</td><td></td><td></td><td></td><td>692937</td><td>DAY 3</td><td>25</td><td></td><td></td><td></td><td></td><td></td><td></td><td class="n"></td></tr>
            <tr><th>3255</th><td class="dt">30/04/2025</td><td></td><td></td><td></td><td>692938</td><td>DAY 3</td><td>15</td><td></td><td></td><td></td><td></td><td></td><td></td><td class="n"></td></tr>
            <tr><th>3256</th><td class="dt">30/04/2025</td><td></td><td></td><td></td><td class="mg">1369949</td><td class="mg">SG</td><td class="mg">46</td><td>Y</td><td>Y</td><td></td><td></td><td></td><td></td><td class="n"></td></tr>
            <tr><th class="on">3257</th><td></td><td class="active">692947</td><td></td><td></td><td></td><td></td><td></td><td></td><td></td><td></td><td></td><td></td><td></td><td class="n"></td></tr>
            <tr><th>3258</th><td></td><td></td><td></td><td></td><td></td><td></td><td></td><td></td><td></td><td></td><td></td><td></td><td></td><td class="n"></td></tr>
            <tr><th>3259</th><td></td><td></td><td></td><td></td><td></td><td></td><td></td><td></td><td></td><td></td><td></td><td></td><td></td><td class="n"></td></tr>
            <tr><th>3260</th><td></td><td></td><td></td><td></td><td></td><td></td><td></td><td></td><td></td><td></td><td></td><td></td><td></td><td class="n"></td></tr>
            <tr><th>3261</th><td></td><td></td><td></td><td></td><td></td><td></td><td></td><td></td><td></td><td></td><td></td><td></td><td></td><td class="n"></td></tr>
            <tr><th>3262</th><td></td><td></td><td></td><td></td><td></td><td></td><td></td><td></td><td></td><td></td><td></td><td></td><td></td><td class="n"></td></tr>
          </tbody>
        </table>
      </div>
      <div class="vscroll"><span class="up"></span><span class="thumb"></span><span class="down"></span></div>
    </div>
    <div class="sheetbar">
      <span class="sb-prev">‹</span><span class="sb-next">›</span><span class="sb-more">•••</span>
      <span class="sheet-tab"><span>April 2025</span></span>
      <span class="sb-sep"></span>
      <span class="sb-add">+</span>
      <span class="sb-kebab">⋮</span>
      <div class="hscroll"><span class="la"></span><span class="hthumb"></span><span class="ra"></span></div>
    </div>
    <footer class="status xl-status">
      <span class="xs-enter">Enter</span>
      <svg class="st-i ic"><use href="#access"/></svg>
      <b class="st-e">Accessibility: Investigate</b>
      <span class="xs-views dim">
        <svg class="ic"><use href="#grid"/></svg>
        <svg class="ic"><use href="#pagel"/></svg>
        <svg class="ic"><use href="#pageb"/></svg>
      </span>
      <span class="xs-zoom">
        <span class="z-m">−</span><span class="z-track"><i></i></span><span class="z-m">+</span><span class="z-pct">115%</span>
      </span>
    </footer>
  </section>
</main>

<footer class="taskbar">
  <svg class="tk-win"><use href="#win"/></svg>
  <span class="tk-search"><svg class="ic"><use href="#find"/></svg>Search</span>
  <div class="tk-icons">
    <span class="tk"><svg><use href="#folder"/></svg></span>
    <span class="tk dot"><svg><use href="#chrome"/></svg></span>
    <span class="tk dot"><svg><use href="#outlook"/></svg></span>
    <span class="tk dot"><svg><use href="#word"/></svg></span>
    <span class="tk active"><svg><use href="#excel"/></svg></span>
    <span class="tk dot"><svg><use href="#notes"/></svg></span>
    <span class="tk dot"><svg><use href="#gear"/></svg></span>
    <span class="tk dot badge"><svg><use href="#teams"/></svg><em>✓</em></span>
    <span class="tk dot"><svg><use href="#disk"/></svg></span>
    <span class="tk dot"><svg><use href="#pp"/></svg></span>
    <span class="tk dot"><svg><use href="#qq"/></svg></span>
  </div>
  <div class="clock"><span>07:39:15</span><span>30/04/2025</span></div>
</footer>
</body>
</html>
```

FILE: styles.css
```css
* { box-sizing: border-box; }
html, body { margin: 0; height: 100%; }
body {
  width: 1920px; height: 1080px; overflow: hidden;
  display: flex; flex-direction: column;
  font-family: "Open Sans", "Noto Sans", sans-serif;
  font-size: 12.5px; color: #262626; background: #ececec;
}
.defs { position: absolute; width: 0; height: 0; }
svg { display: block; flex: none; }
.ic { fill: none; stroke: currentColor; stroke-width: 1; overflow: visible; }
i { font-style: normal; }
.dim { color: #a3a3a3; }
.purple { color: #a33ba8; stroke-width: 1.4; }

.desktop { position: relative; height: 1032px; flex: none; overflow: hidden; }
.win-back { position: absolute; left: 0; top: 0; width: 900px; height: 1032px; background: #efefef; display: flex; flex-direction: column; }
.win-word {
  position: absolute; left: 45px; top: 50px; width: 680px; height: 919px;
  background: #efefef; border: 1px solid #8d8d8d; border-right: 0; border-bottom: 0; border-radius: 8px 0 0 8px;
  display: flex; flex-direction: column;
  box-shadow: 5px 8px 26px rgba(0,0,0,.55);
}
.win-excel {
  position: absolute; left: 705px; top: 5px; width: 1215px; height: 1025px;
  background: #e3e3e6; border: 1px solid #217346; border-radius: 8px;
  display: flex; flex-direction: column; overflow: hidden;
}

/* title bars */
.title { height: 48px; flex: none; display: flex; align-items: center; padding-left: 16px; font-size: 12.5px; letter-spacing: -.2px; }
.title > * { flex: none; }
.win-word .title { padding-left: 16px; }
.win-excel .title { padding-left: 15px; height: 48px; }
.q-app { width: 16px; height: 16px; margin-right: 16px; }
.q-auto { width: 48px; margin-right: 7px; white-space: nowrap; font-size: 12px; }
.toggle { width: 45px; height: 20px; border: 1px solid #7a7a7a; border-radius: 10px; display: flex; align-items: center; gap: 5px; padding-left: 3px; font-size: 12px; margin-right: 13px; color: #444; }
.toggle.dim { color: #a8a8a8; border-color: #b5b5b5; }
.toggle i { width: 14px; height: 14px; border-radius: 50%; background: #666; }
.toggle.dim i { background: #bdbdbd; }
.q-save { width: 16px; height: 20px; margin-right: 14px; }
.win-back .q-save, .win-word .q-save { margin-right: 11px; }
.q-undo { width: 18px; height: 20px; margin-right: 2px; }
.q-chev { width: 9px; height: 9px; margin-right: 10px; }
.win-back .q-chev, .win-word .q-chev { margin-right: 10px; margin-left: 2px; }
.q-redo { width: 18px; height: 20px; margin-right: 16px; }
.win-back .q-redo { margin-right: 14px; }
.win-word .q-redo { margin-right: 13px; }
.win-back .q-qat { margin-right: 25px; }
.win-excel .q-chev { margin-left: 2px; margin-right: 9px; }
.win-excel .q-redo { margin-right: 2px; }
.q-chev2 { width: 9px; height: 9px; margin-right: 14px; }
.q-qat { width: 10px; height: 10px; margin-right: 24px; }
.win-excel .q-qat { margin-right: 23px; }
.q-name { white-space: nowrap; font-size: 12.5px; }
.win-excel .q-name { color: #333; }
.chev { width: 10px; height: 10px; color: inherit; }
.title .chev { width: 13px; height: 13px; margin-left: 3px; }
.search { background: #fafafa; border: 1px solid #e6e6e6; border-bottom: 2px solid #cfcfcf; border-radius: 4px; display: flex; align-items: center; gap: 12px; padding-left: 13px; height: 31px; font-size: 13px; }
.search svg { width: 16px; height: 16px; }
.word-search { margin-left: 42px; width: 300px; color: #a6a6a6; }
.xl-search { margin-left: 41px; width: 326px; color: #555; }
.avatar { margin-left: 256px; width: 24px; height: 24px; border-radius: 50%; background: #c239b3; color: #f6dff3; font-size: 10px; display: flex; align-items: center; justify-content: center; }
.wbtn { width: 48px; height: 24px; display: flex; align-items: center; justify-content: center; color: #222; font-size: 13px; }
.wbtn.min { margin-left: 12px; }
.wbtn.min::before { content: ""; width: 11px; height: 1px; background: #222; }
.wbtn.max::before { content: ""; width: 10px; height: 10px; border: 1px solid #222; border-radius: 1px; }

/* tabs */
.tabs { display: flex; align-items: center; font-size: 12.5px; letter-spacing: -.1px; color: #262626; }
.tabs span { position: relative; white-space: nowrap; }
.tabs .on { font-weight: 600; margin-left: 6px; }
.tabs .on::after { content: ""; position: absolute; left: 0; right: 0; bottom: -5px; height: 2px; background: #185abd; }
.word-tabs { height: 30px; flex: none; gap: 20.500px; padding-left: 22px; }
.tabbar { height: 29px; flex: none; display: flex; align-items: center; padding-right: 12px; }
.xl-tabs { gap: 21.200px; padding-left: 21px; flex: 1; }
.xl-tabs .on::after { background: #107c41; bottom: -4px; }
.comments { display: flex; align-items: center; gap: 4px; width: 89px; height: 23px; border: 1px solid #8a8a8a; border-radius: 4px; background: #fff; justify-content: center; font-size: 12.5px; margin-right: 9px; }
.comments svg, .share svg:first-child { width: 13px; height: 13px; }
.share { display: flex; align-items: center; gap: 4px; width: 71px; height: 24px; background: #107c41; color: #fff; border-radius: 4px; justify-content: center; font-size: 12.5px; }
.share .chev { width: 10px; height: 10px; }

/* ribbon */
.ribbon { display: flex; flex: none; background: #fff; border-radius: 8px; box-shadow: 0 1px 2px rgba(0,0,0,.25); font-size: 12px; }
.word-ribbon { margin-left: 8px; height: 100px; width: 660px; }
.xl-ribbon { margin: 0 8px; height: 101px; position: relative; }
.grp { display: flex; flex-direction: column; position: relative; padding-top: 4px; flex: none; }
.grp::after { content: ""; position: absolute; right: 0; top: 5px; bottom: 5px; width: 1px; background: #d4d4d4; }
.grp-body { flex: 1; min-height: 0; }
.lab { height: 22px; flex: none; display: flex; align-items: center; justify-content: center; font-size: 11.5px; color: #333; letter-spacing: -.1px; position: relative; white-space: nowrap; }
.lab.lau { padding-right: 14px; }
.launch { position: absolute; right: 6px; top: 6px; width: 9px; height: 9px; color: #555; }
.cols { display: flex; }
.big { display: flex; flex-direction: column; align-items: center; white-space: nowrap; }
.big span { margin-top: 3px; }
.big .chev { margin-top: 3px; }
.xc-sens .big span, .xc-add .big span { margin-top: 5px; }
.top4 { padding-top: 3px; }
.top6 { padding-top: 5px; }
.off, .off .ic { color: #a8a8a8; }
.wc-clip { width: 88px; }
.wc-font { width: 235px; }
.wc-para { width: 71px; }
.wc-styl { width: 58px; }
.wc-edit { width: 56px; }
.wc-voice { width: 58px; }
.wc-sens { width: 73px; }
.paste-big { width: 56px; padding-left: 9px; padding-top: 5px; }
.i-paste { width: 27px; height: 31px; }
.grey-clip { --clip: #b0b0b0; }
.stack { width: 24px; display: flex; flex-direction: column; align-items: center; gap: 7px; padding-top: 3px; margin-left: -1px; }
.s-tool { width: 15px; height: 19px; }
.i-lines { width: 40px; height: 20px; margin-top: 6px; margin-bottom: 4px; color: #333; }
.i-30 { width: 30px; height: 30px; }
.i-28 { width: 28px; height: 28px; }
.combo-row { display: flex; gap: 2px; padding-left: 8px; }
.combo { height: 24px; border: 1px solid #8a8a8a; border-radius: 4px; display: flex; align-items: center; justify-content: space-between; padding: 0 3px; font-size: 12.5px; color: #222; }
.combo .chev { width: 10px; height: 10px; }
.w174 { width: 174px; } .w43 { width: 43px; } .w101 { width: 101px; } .w42 { width: 42px; }
.btn-row { display: flex; align-items: center; height: 26px; padding-left: 7px; }
.b { display: flex; align-items: center; justify-content: center; height: 24px; font-size: 13px; font-style: normal; color: #222; position: relative; text-decoration: none; flex: none; }
u.b, s.b { text-decoration: underline; }
s.b { text-decoration: line-through; }
.serifi { font-family: "Liberation Serif", serif; font-style: italic; }
.b sub, .b sup { font-size: 8px; color: #2b7cd3; line-height: 0; }
.w8 { width: 8px; } .w10 { width: 10px; } .w12 { width: 12px; } .w14 { width: 14px; } .w24 { width: 24px; } .w26 { width: 26px; } .w27 { width: 27px; } .w28 { width: 28px; } .w30 { width: 30px; } .w32 { width: 32px; } .w36 { width: 36px; }
.b .chev { width: 9px; height: 9px; }
.sep { width: 1px; height: 24px; background: #cfcfcf; flex: none; }
.r2sep { margin-left: 10px; }
.ap { font-size: 15px; }
.ap em { font-size: 7px; font-style: normal; color: #c239b3; position: absolute; right: 6px; bottom: 5px; }
.txt-eff { font-size: 19px; font-weight: 700; color: #2b7cd3; -webkit-text-stroke: .4px #1a4f9c; }
.col-a { flex-direction: column; font-size: 15px; line-height: 14px; }
.fa { justify-content: flex-start; padding-top: 2px; }
.pen { font-size: 13px; line-height: 14px; color: #666; }
.bar { width: 16px; height: 4px; display: block; }
.yellow { background: #ffff00; }
.red { background: #ff0000; }
.aa { font-size: 14px; }
.grow { font-size: 16px; }
.grow em { font-size: 10px; font-style: normal; color: #2b7cd3; margin-top: -4px; }
.big-a { font-size: 18px; }

/* xl ribbon */
.xc-clip { width: 112px; }
.xc-font { width: 162px; }
.xc-align { width: 141px; }
.xc-num { width: 107px; }
.xc-sty { width: 185px; }
.xc-cells { width: 106px; }
.xc-edit { width: 106px; }
.xc-sens { width: 74px; }
.xc-add { width: 63px; }
.xc-an { width: 62px; }
.xl-paste { width: 66px; padding-top: 5px; }
.xl-stack { width: 40px; gap: 7px; padding-top: 3px; align-items: flex-start; padding-left: 0; margin-left: -6px; }
.s-line { display: flex; align-items: center; gap: 12px; }
.blue-sc { --sc: #2b8ad6; color: #333; }
.grey-br { --br: #b8b8b8; }
.xc-font .combo-row { padding-left: 8px; gap: 3px; }
.xr1 { padding-left: 7px; height: 27px; margin-top: 1px; }
.xr2 { padding-left: 7px; height: 26px; }
.s16 { width: 16px; height: 16px; }
.s18 { width: 18px; height: 18px; }
.al-body { padding-top: 3px; display: flex; flex-direction: column; gap: 8px; }
.al-row { display: flex; align-items: center; gap: 10px; padding-left: 12px; height: 18px; }
.ml2 { margin-left: 2px; }
.ml8 { margin-left: 4px; }
.num-body { display: flex; flex-direction: column; padding-left: 9px; }
.general { width: 91px; background: #eaeaea; border-color: #dcdcdc; color: #a3a3a3; height: 23px; }
.num-row { display: flex; align-items: center; gap: 6px; height: 27px; margin-top: 1px; padding-left: 2px; }
.pct { font-size: 18px; margin-left: 8px; color: #8a8a8a; }
.cma { font-size: 18px; margin-left: 9px; color: #8a8a8a; }
.num-row.dec { gap: 7px; height: 24px; margin-top: 0; }
.list { display: flex; flex-direction: column; padding-left: 13px; padding-top: 4px; gap: 4px; font-size: 11.5px; white-space: nowrap; }
.list span { display: flex; align-items: center; gap: 4px; height: 22px; }
.list .chev { width: 9px; height: 9px; }
.list .far { margin-left: 14px; }
.xc-cells .list { padding-left: 12px; color: #222; }
.ed-body { display: flex; flex-wrap: wrap; align-content: flex-start; padding-left: 12px; row-gap: 3px; padding-top: 2px; }
.ed-body span { display: flex; align-items: center; gap: 6px; height: 24px; }
.ed-a { width: 50px; }
.ed-b { width: 42px; }
.ed-body .chev { width: 9px; height: 9px; }
.two { text-align: center; line-height: 16px; margin-top: 5px !important; }
.xc-an::after { top: 5px; }
.collapse { position: absolute; right: 9px; bottom: 9px; width: 13px; height: 13px; color: #222; }

/* formula bar */
.fbar { height: 24px; flex: none; margin: 9px 9px 8px 8px; display: flex; align-items: stretch; }
.fbar > span { background: #fff; border-radius: 4px; box-shadow: 0 0 1px rgba(0,0,0,.35); display: flex; align-items: center; }
.namebox { width: 100px; padding: 0 7px; justify-content: space-between; font-size: 12px; }
.fbar > .kebab { background: none; box-shadow: none; width: 22px; justify-content: center; font-size: 14px; font-weight: 700; }
.fbtns { width: 84px; padding-left: 6px; gap: 7px; }
.fx-x { color: #d9534f; font-size: 16px; }
.fx-ok { color: #3e9b5a; font-size: 16px; margin-left: 1px; }
.fx-f { font-family: "Liberation Serif", serif; font-style: italic; font-size: 15px; font-weight: 700; margin-left: 2px; }
.fbtns .chev { margin-left: -5px; }
.finput { flex: 1; margin-left: 6px; padding: 0 5px 0 9px; justify-content: space-between; font-size: 12px; }
.finput .chev { width: 12px; height: 12px; }

/* grid */
.gridwrap { height: 750px; flex: none; display: flex; }
.sheetclip { width: 1191px; height: 750px; overflow: hidden; background: #fff; }
.sheet { table-layout: fixed; width: 1191px; border-collapse: separate; border-spacing: 0; font-family: Lato, "Liberation Sans", sans-serif; font-size: 15.5px; color: #111; }
.c-rh { width: 42px; } .c-a { width: 112px; } .c-b { width: 121px; background: #66c9ff; } .c-c { width: 74px; background: #66c9ff; } .c-d { width: 96px; background: #66c9ff; }
.c-e { width: 94px; background: #ff99ff; } .c-f { width: 69px; background: #ff99ff; } .c-g { width: 74px; background: #ff99ff; }
.c-h { width: 74px; background: #dd44b0; } .c-i { width: 74px; background: #dd44b0; }
.c-j { width: 87px; background: #ffc000; } .c-k { width: 74px; background: #ffc000; }
.c-l { width: 99px; background: #92d050; } .c-m { width: 74px; background: #92d050; } .c-n { width: 27px; }
.sheet th, .sheet td { padding: 0; height: 23px; line-height: 21px; text-align: center; overflow: visible; }
.sheet thead th { background: #efefef; border-right: 1px solid #dcdcdc; border-bottom: 1px solid #a8a8a8; font-family: "Open Sans", sans-serif; font-weight: 400; font-size: 13.5px; color: #444; }
.sheet thead th.on { background: #dcdcdc; color: #217346; border-bottom: 2px solid #217346; }
.corner { position: relative; }
.corner span { position: absolute; right: 3px; bottom: 3px; border-style: solid; border-width: 0 0 14px 14px; border-color: transparent transparent #d0d0d0 transparent; }
.sheet tbody th { background: #efefef; border-right: 1px solid #bdbdbd; border-bottom: 1px solid #d8d8d8; font-weight: 400; color: #444; font-size: 15px; white-space: nowrap; overflow: hidden; }
.sheet tbody th.on { background: #dcdcdc; color: #217346; border-right: 2px solid #217346; }
.sheet td { border-right: 1px solid #000; border-bottom: 1px solid #000; white-space: nowrap; }
.sheet td.n { border-right: 0; border-bottom: 1px solid #dcdcdc; background: #fff; }
.hd { font-weight: 700; color: #000; }
.sheet td.hd { border-bottom: 1px solid #9d9d9d; }
.frozen th, .sheet .frozen td.n { border-bottom-color: #9d9d9d !important; }
.h-april { background: #f2f2f2; font-size: 25px; }
.sheet td.h-big { font-size: 34px; line-height: 40px; }
.sheet td.h-ship { font-size: 23.5px; line-height: 36px; }
.sheet td.h-john { font-size: 24px; line-height: 30px; }
.dt { font-weight: 700; color: #000; }
.sheet td.mg { background: #dd44b0; }
.active { position: relative; }
.active::before { content: ""; position: absolute; inset: -1px -1px 0 -1px; border: 2px solid #217346; }
.active::after { content: ""; position: absolute; right: -3px; bottom: -3px; width: 6px; height: 6px; background: #217346; border: 1px solid #fff; border-width: 1px 0 0 1px; }
.vscroll { width: 18px; height: 750px; background: #f4f4f4; border-radius: 8px; position: relative; display: flex; flex-direction: column; align-items: center; }
.vscroll .up { margin-top: 5px; border-style: solid; border-width: 0 4.500px 7px 4.500px; border-color: transparent transparent #666 transparent; }
.vscroll .thumb { margin-top: 6px; width: 9px; height: 17px; border-radius: 5px; background: #6e6e6e; }
.vscroll .down { margin-top: auto; margin-bottom: 3px; border-style: solid; border-width: 7px 4.500px 0 4.500px; border-color: #666 transparent transparent transparent; }

/* sheet bar */
.sheetbar { height: 32px; flex: none; display: flex; align-items: flex-start; background: #e3e3e6; font-size: 13px; position: relative; }
.sb-prev, .sb-next { font-size: 22px; line-height: 28px; width: 32px; text-align: center; color: #444; font-weight: 300; }
.sb-prev { margin-left: 15px; }
.sb-next { color: #a0a0a0; }
.sb-more { font-size: 9px; line-height: 28px; letter-spacing: -1px; color: #333; width: 20px; text-align: center; margin-left: 3px; }
.sheet-tab { margin-left: 5px; width: 81px; height: 28px; background: #fff; border-radius: 0 0 5px 5px; display: flex; justify-content: center; font-weight: 600; font-size: 14px; letter-spacing: -.1px; }
.sheet-tab span { height: 25px; line-height: 24px; width: 65px; text-align: center; border-bottom: 2px solid #107c41; white-space: nowrap; }
.sb-sep { width: 1px; height: 20px; background: #c4c4c4; margin: 4px 0 0 4px; }
.sb-add { margin-left: 49px; font-size: 20px; line-height: 28px; font-weight: 300; color: #333; }
.sb-kebab { margin-left: 469px; font-size: 16px; font-weight: 700; line-height: 28px; color: #222; }
.hscroll { margin-left: 8px; margin-top: 7px; width: 445px; height: 17px; background: #f4f4f4; border-radius: 9px; display: flex; align-items: center; padding: 0 4px; position: relative; }
.la { border-style: solid; border-width: 4.500px 7px 4.500px 0; border-color: transparent #666 transparent transparent; }
.hthumb { margin-left: 6px; width: 261px; height: 9px; border-radius: 5px; background: #6e6e6e; }
.ra { margin-left: auto; border-style: solid; border-width: 4.500px 0 4.500px 7px; border-color: transparent transparent transparent #666; }

/* status bars */
.status { display: flex; align-items: center; flex: none; font-size: 11px; color: #333; letter-spacing: -.1px; white-space: nowrap; }
.st-i { width: 14px; height: 16px; color: #444; }
.st-e { font-weight: 600; }
.back-status { height: 22px; background: #f0f0f0; padding-left: 12px; }
.back-status .st-a { width: 76px; }
.back-status .st-b { width: 72px; }
.back-status .st-c { margin-left: 17px; width: 150px; }
.back-status .st-acc { margin-left: 0; margin-right: 4px; }
.back-status .st-d { width: 122px; }
.word-status { height: 21px; padding-bottom: 2px; background: #f3f3f3; padding-left: 12px; margin-top: auto; border-radius: 0 0 0 8px; }
.word-status .st-a { width: 77px; }
.word-status .st-b { width: 60px; }
.word-status .st-c { margin-left: 18px; width: 149px; }
.word-status .st-d { width: 186px; }
.st-focus { display: flex; align-items: center; gap: 3px; width: 79px; }
.st-focus svg { width: 13px; height: 15px; color: #444; }
.st-read { width: 14px; height: 14px; color: #333; }
.st-print { margin-left: 6px; width: 39px; height: 21px; margin-bottom: -2px; background: #dedede; display: flex; align-items: center; justify-content: center; }
.st-print svg { width: 12px; height: 14px; }
.xl-status { height: 22px; background: #f5f5f5; padding-left: 11px; }
.xs-enter { width: 50px; }
.xl-status .st-i { margin-right: 3px; }
.xs-views { display: flex; gap: 26px; margin-left: 711px; align-items: center; }
.xs-views svg { width: 14px; height: 14px; }
.xs-zoom { display: flex; align-items: center; margin-left: 17px; color: #aaa; font-size: 13px; }
.z-track { width: 100px; height: 1px; background: #666; margin: 0 5px; position: relative; }
.z-track i { position: absolute; left: 50%; top: -3px; width: 1px; height: 7px; background: #555; }
.z-pct { font-size: 11.500px; margin-left: 12px; }

/* back window parts */
.back-tab { height: 30px; flex: none; padding: 6px 0 0 22px; font-size: 12.5px; }
.back-rib { margin-left: 8px; width: 60px; height: 100px; flex: none; background: #fff; border-radius: 8px; display: flex; flex-direction: column; padding: 10px 0 0 19px; font-size: 12px; }
.back-paste { width: 27px; height: 31px; }
.back-rib span { margin-top: 7px; }
.back-rib .chev { margin: 3px 0 0 9px; }
.back-doc { flex: 1; background: #f0f0f0; position: relative; overflow: hidden; }
.back-line { position: absolute; left: 555px; bottom: 0; width: 1px; height: 60px; background: #8f8f8f; }
.back-txt { position: absolute; top: 782px; font-size: 12.5px; white-space: nowrap; color: #222; }
.back-txt.a { left: 398px; }
.back-txt.b { left: 671px; }

/* word doc canvas */
.word-doc { flex: 1; min-height: 0; background: #fff; position: relative; overflow: hidden; }
.page-edge { position: absolute; left: 0; top: 0; bottom: 0; width: 37px; background: #f3f3f3; border-right: 1px solid #d8d8d8; }
.sl { position: absolute; left: 335px; width: 4px; }
.red1 { left: 133px; top: 9px; height: 18px; background: #f00; }
.red2 { left: 133px; top: 39px; height: 16px; background: #a80000; }
.tag { background: #fff6b0; font-size: 12px; line-height: 18px; font-family: "Liberation Sans", sans-serif; overflow: hidden; box-shadow: 1px 1px 1px #bbb; }
.d1 { left: 335px; top: 8px; width: 12px; height: 18px; padding-left: 2px; }
.f2 { left: 335px; top: 285px; width: 6px; height: 16px; }
.d3 { left: 335px; top: 316px; width: 6px; height: 16px; }
.or1 { top: 79px; height: 13px; background: #d07200; }
.gr1 { top: 92px; height: 12px; background: #dcdcdc; }
.or2 { top: 104px; height: 27px; background: #c86a00; }
.gr2 { top: 131px; height: 13px; background: #dcdcdc; }
.br1 { top: 144px; height: 27px; background: #a84a08; }
.gr3 { top: 171px; height: 13px; background: #dcdcdc; }
.br2 { top: 184px; height: 28px; background: #9c3e00; }
.sit { top: 231px; width: 8px; font-size: 9px; overflow: hidden; font-family: "Liberation Sans", sans-serif; }
.pg { left: 133px; top: 540px; height: 87px; background: #b8b8b8; }
.lb { position: absolute; background: #fff; border: 1px solid #0078d7; box-shadow: 3px 3px 3px rgba(0,0,0,.55); font-family: "Liberation Sans", sans-serif; font-size: 10.8px; line-height: 14px; color: #111; }
.lb > div { padding-left: 2px; height: 14px; white-space: pre; }
.lb .sel { background: #0078d7; color: #fff; }
.topped { border-top: 2px solid #c6dff5; }
.lb .sel { height: 16px; padding-top: 2px; }
.under { left: 347px; top: 45px; width: 193px; height: 19px; padding: 8px 0 0 2px; border: 0; line-height: 11px; white-space: pre; }
.lb1 { left: 137px; top: -12px; width: 198px; }
.lb2 { left: 347px; top: 27px; width: 193px; }
.lb3 { left: 133px; top: 79px; width: 198px; border-top-width: 4px; }
.lb4 { left: 340px; top: 459px; width: 193px; }
.lb4 .sel { height: 17px; padding-top: 3px; }
.lb5 { left: 136px; top: 486px; width: 198px; }
.ctrl { position: absolute; left: 340px; top: 651px; width: 61px; height: 23px; border: 1px solid #ababab; background: #fff; display: flex; align-items: center; padding-left: 4px; gap: 2px; font-size: 11.5px; color: #333; }
.ctrl svg { width: 14px; height: 16px; }
.caret { border-style: solid; border-width: 3px 3px 0 3px; border-color: #555 transparent transparent transparent; margin-left: 3px; }

/* taskbar */
.taskbar { height: 48px; flex: none; background: #1c1c1c; display: flex; align-items: center; padding-left: 21px; color: #d8d8d8; position: relative; }
.tk-win { width: 23px; height: 23px; }
.tk-search { margin-left: 13px; width: 220px; height: 32px; background: #3a3a3a; border-radius: 16px; border: 1px solid #444; display: flex; align-items: center; gap: 9px; padding-left: 11px; font-size: 13px; color: #cfcfcf; }
.tk-search svg { width: 16px; height: 16px; transform: scaleX(-1); color: #dcdcdc; stroke-width: 1.6; }
.tk-icons { display: flex; margin-left: 2px; }
.tk { width: 44.100px; height: 44px; display: flex; align-items: center; justify-content: center; position: relative; }
.tk svg { width: 24px; height: 24px; }
.tk.dot::after { content: ""; position: absolute; bottom: 1px; left: 20px; width: 5px; height: 3px; border-radius: 2px; background: #8c8c8c; }
.tk.active { background: #2a2a2a; border-radius: 4px; box-shadow: inset 0 0 0 1px #2f2f2f; }
.tk.active::after { content: ""; position: absolute; bottom: 1px; left: 14px; width: 16px; height: 3px; border-radius: 2px; background: #10c060; }
.tk.badge em { position: absolute; right: 3px; top: 3px; width: 14px; height: 14px; border-radius: 50%; background: #0f8a2c; color: #fff; font-style: normal; font-size: 9px; line-height: 14px; text-align: center; }
.clock { margin-left: auto; padding-right: 23px; display: flex; flex-direction: column; align-items: flex-end; font-size: 12px; line-height: 16px; color: #d0d0d0; }
```
